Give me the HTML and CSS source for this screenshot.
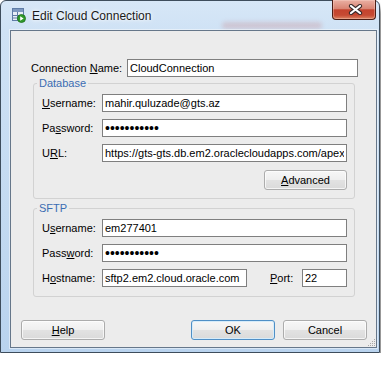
FILE: index.html
```html
<!DOCTYPE html>
<html lang="en">
<head>
    <meta charset="UTF-8">
    <title>Edit Cloud Connection</title>
    <link rel="stylesheet" href="styles.css">
</head>
<body>

<div class="window">
    <div class="title-bar">
        <svg class="app-icon" width="14" height="15" viewBox="0 0 14 15">
            <rect x="0.5" y="0.5" width="11" height="12" fill="#e8eef6" stroke="#5f7ca6"/>
            <rect x="1" y="1" width="10" height="3" fill="#7d98bf"/>
            <path d="M1 7.5 H11 M1 10 H11 M5.5 4 V12.5" stroke="#5f7ca6" stroke-width="1"/>
            <circle cx="9.5" cy="10.5" r="4" fill="#2f9a2a" stroke="#1d6e1a" stroke-width="0.8"/>
            <path d="M8.2 8.3 L11.6 10.5 L8.2 12.7 Z" fill="#fff"/>
        </svg>
        <span class="title">Edit Cloud Connection</span>
        <span class="glass-smudge"></span>
        <div class="close-btn">
            <svg width="15" height="11" viewBox="0 0 15 11">
                <path d="M3 2 L12 9 M12 2 L3 9" stroke="#3a2b2b" stroke-width="4.2" stroke-linecap="round"/>
                <path d="M3 2 L12 9 M12 2 L3 9" stroke="#ffffff" stroke-width="2.2" stroke-linecap="round"/>
            </svg>
        </div>
    </div>

    <div class="client">
        <div class="name-row">
            <label class="name-label">Connection <u>N</u>ame:</label>
            <input class="field" type="text" value="CloudConnection">
        </div>

        <fieldset class="group">
            <legend>Database</legend>
            <div class="row">
                <label><u>U</u>sername:</label>
                <input class="field" type="text" value="mahir.quluzade@gts.az">
            </div>
            <div class="row">
                <label>Pa<u>s</u>sword:</label>
                <input class="field secret" type="password" value="xxxxxxxxxxx">
            </div>
            <div class="row">
                <label>U<u>R</u>L:</label>
                <input class="field" type="text" value="https://gts-gts.db.em2.oraclecloudapps.com/apex">
            </div>
            <div class="group-actions">
                <button class="btn advanced-btn"><u>A</u>dvanced</button>
            </div>
        </fieldset>

        <fieldset class="group sftp">
            <legend>SFTP</legend>
            <div class="row">
                <label>U<u>s</u>ername:</label>
                <input class="field" type="text" value="em277401">
            </div>
            <div class="row">
                <label>Pass<u>w</u>ord:</label>
                <input class="field secret" type="password" value="xxxxxxxxxxx">
            </div>
            <div class="row">
                <label>H<u>o</u>stname:</label>
                <input class="field host-field" type="text" value="sftp2.em2.cloud.oracle.com">
                <label class="port-label"><u>P</u>ort:</label>
                <input class="field port-field" type="text" value="22">
            </div>
        </fieldset>

        <div class="buttons">
            <button class="btn"><u>H</u>elp</button>
            <span class="spacer"></span>
            <button class="btn default-btn">OK</button>
            <button class="btn">Cancel</button>
        </div>

        <svg class="grip" width="8" height="8" viewBox="0 0 8 8">
            <g fill="#a8a8a8">
                <rect x="6" y="0" width="1" height="1"/>
                <rect x="4" y="2" width="1" height="1"/>
                <rect x="6" y="2" width="1" height="1"/>
                <rect x="2" y="4" width="1" height="1"/>
                <rect x="4" y="4" width="1" height="1"/>
                <rect x="6" y="4" width="1" height="1"/>
                <rect x="0" y="6" width="1" height="1"/>
                <rect x="2" y="6" width="1" height="1"/>
                <rect x="4" y="6" width="1" height="1"/>
                <rect x="6" y="6" width="1" height="1"/>
            </g>
        </svg>
    </div>
</div>

</body>
</html>
```

FILE: styles.css
```css
body {
    margin: 0;
    padding: 0;
    background: #ffffff;
    font-family: "Liberation Sans", Arial, sans-serif;
    font-size: 11px;
    color: #000000;
}

.window {
    width: 380px;
    height: 353px;
    box-sizing: border-box;
    display: flex;
    flex-direction: column;
    border: 1px solid #3e4d5c;
    border-radius: 6px 6px 0 0;
    padding: 0 2px 4px 9px;
    background: linear-gradient(to bottom, #d7e7f7 0, #cfe2f5 30px, #c3daf1 60%, #b9d3ee 100%);
    box-shadow: 2px 6px 5px -1px rgba(0, 0, 0, 0.7);
}

.title-bar {
    height: 29px;
    display: flex;
    align-items: flex-start;
    flex-shrink: 0;
}

.app-icon {
    margin: 7px 0 0 2px;
}

.title {
    margin: 8px 0 0 6px;
    font-size: 12px;
    line-height: 15px;
    color: #1a1a1a;
    text-shadow: 0 0 6px #ffffff, 0 0 3px #ffffff;
}

.glass-smudge {
    width: 100px;
    height: 7px;
    margin: 21px 10px 0 auto;
    border-radius: 4px;
    background: rgba(200, 110, 110, 0.25);
    filter: blur(2px);
}

.close-btn {
    width: 44px;
    height: 20px;
    margin: -1px 1px 0 0;
    box-sizing: border-box;
    display: flex;
    align-items: center;
    justify-content: center;
    padding-left: 3px;
    border: 1px solid #4b1d15;
    border-top: none;
    border-radius: 0 0 4px 4px;
    background: linear-gradient(to bottom, #eab0a3 0%, #d98574 45%, #c4432e 52%, #c64a33 80%, #dc8463 100%);
    box-shadow: inset 0 0 0 1px rgba(255, 220, 210, 0.35);
}

.client {
    position: relative;
    height: 318px;
    box-sizing: border-box;
    border: 1px solid #66778a;
    background: #ececec;
    box-shadow: 0 0 0 1px rgba(255, 255, 255, 0.45);
}

.name-row {
    display: flex;
    align-items: center;
    height: 18px;
    margin: 28px 18px 0 20px;
}

.name-label {
    width: 96px;
}

label {
    white-space: nowrap;
}

.field {
    flex: 1;
    min-width: 0;
    height: 18px;
    box-sizing: border-box;
    margin: 0;
    padding: 0 2px;
    border: 1px solid #7f7f7f;
    background: #ffffff;
    font-family: "Liberation Sans", Arial, sans-serif;
    font-size: 11px;
    color: #000000;
    outline: none;
}

.secret {
    font-size: 14px;
    letter-spacing: 0;
}

.group {
    margin: 0 21px 0 22px;
    padding: 4px 7px 8px 8px;
    border: 1px solid #d2d2d2;
    border-radius: 3px;
}

.group legend {
    margin-left: -5px;
    padding: 0 2px;
    line-height: 13px;
    color: #3b6db3;
}

.sftp {
    margin-top: 3px;
    padding-bottom: 9px;
}

.row {
    display: flex;
    align-items: center;
    height: 18px;
    margin-bottom: 7px;
}

.row:last-of-type {
    margin-bottom: 0;
}

.row label {
    width: 60px;
}

.row .port-label {
    width: 32px;
    margin-left: 23px;
}

.host-field {
    flex: 0 0 145px;
}

.port-field {
    flex: 0 0 45px;
}

.group-actions {
    display: flex;
    justify-content: flex-end;
    margin-top: 8px;
}

.btn {
    width: 84px;
    height: 20px;
    box-sizing: border-box;
    margin: 0;
    padding: 0;
    border: 1px solid #acacac;
    border-radius: 3px;
    background: linear-gradient(to bottom, #f7f7f7 0%, #efefef 48%, #e2e2e2 52%, #dadada 100%);
    box-shadow: inset 0 0 0 1px rgba(255, 255, 255, 0.7);
    font-family: "Liberation Sans", Arial, sans-serif;
    font-size: 11px;
    color: #000000;
}

.advanced-btn {
    width: 83px;
}

.default-btn {
    border-color: #4f8fc6;
    box-shadow: inset 0 0 0 1px #d6ecfa;
}

.buttons {
    display: flex;
    gap: 8px;
    margin: 23px 9px 0 10px;
}

.spacer {
    flex: 1;
}

.grip {
    position: absolute;
    right: 0;
    bottom: 0;
}
```
